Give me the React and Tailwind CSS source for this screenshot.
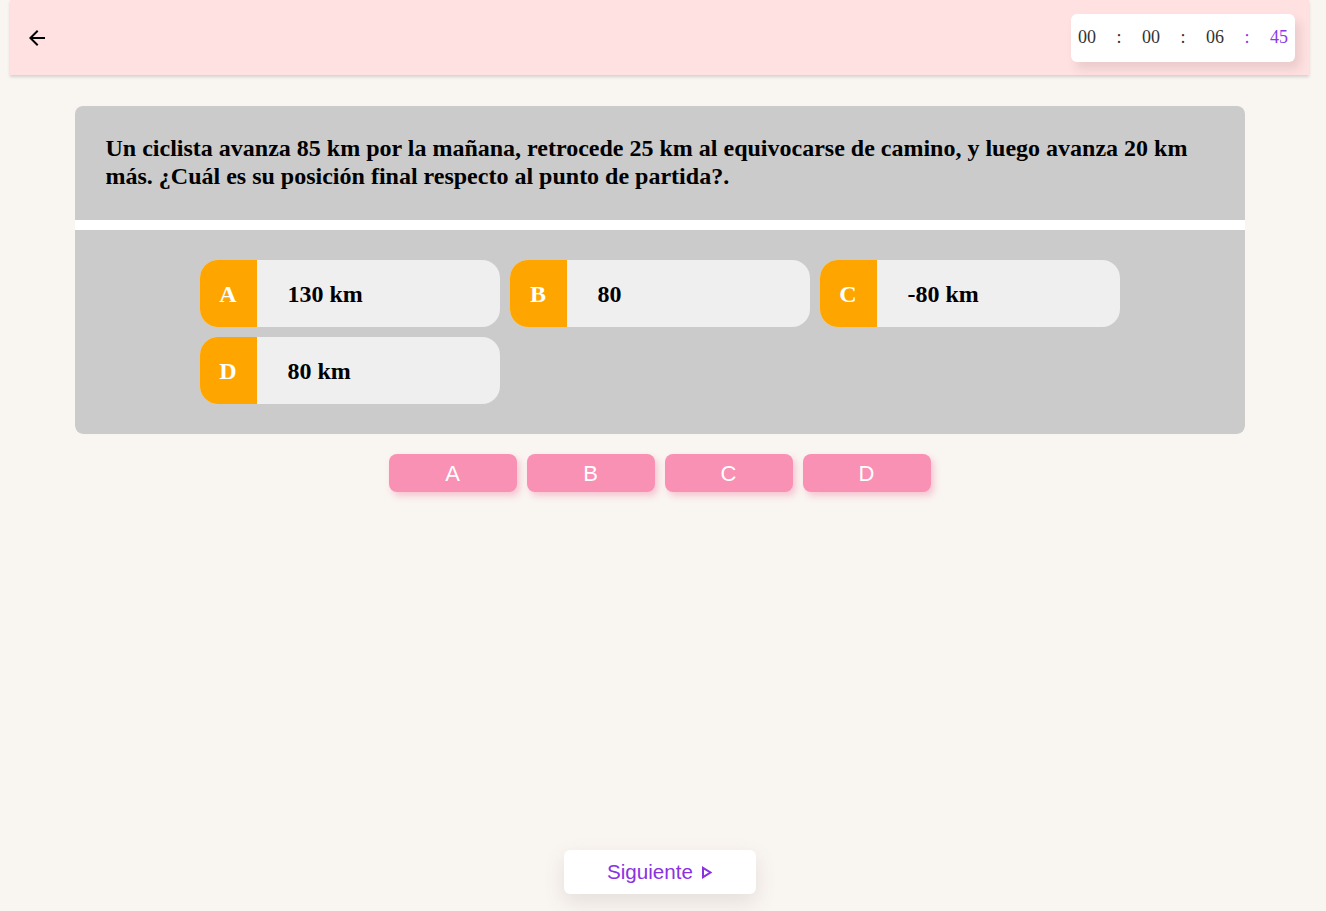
import { MdArrowBack } from "react-icons/md";

const serif = { fontFamily: '"Liberation Serif", "Times New Roman", serif' };
const sans = { fontFamily: '"Liberation Sans", Arial, sans-serif' };

const options = [
  { letter: "A", text: "130 km" },
  { letter: "B", text: "80" },
  { letter: "C", text: "-80 km" },
  { letter: "D", text: "80 km" },
];

const Timer = () => {
  const parts = [
    { v: "00", purple: false },
    { v: "00", purple: false },
    { v: "06", purple: false },
    { v: "45", purple: true },
  ];
  return (
    <div
      className="flex items-center h-[48px] pl-[7px] pr-[7px] bg-white rounded-md shadow-[5px_7px_10px_rgba(120,80,80,0.15)] text-[18px] text-[#333333]"
      style={serif}
    >
      {parts.map((p, idx) => (
        <div key={idx} className="flex items-center">
          {idx > 0 && (
            <span className={`mx-[20.5px] ${p.purple ? "text-[#8a3be6]" : ""}`}>:</span>
          )}
          <span className={p.purple ? "text-[#8a3be6]" : ""}>{p.v}</span>
        </div>
      ))}
    </div>
  );
};

const OptionCard = ({ letter, text }) => (
  <div className="flex w-[300px] h-[67px] rounded-[18px] overflow-hidden bg-[#efefef]">
    <div className="w-[57px] shrink-0 bg-[#ffa500] flex items-center justify-center text-white font-bold text-[24px]">
      {letter}
    </div>
    <div className="flex items-center pl-[31px] text-black font-bold text-[24px]">
      {text}
    </div>
  </div>
);

export default function App() {
  return (
    <div className="min-h-screen bg-[#f9f5f1] flex flex-col">
      <div className="ml-[10px] mr-[17px] flex flex-col flex-1">
        <header className="h-[75px] bg-[#ffe1e2] shadow-[0_2px_3px_rgba(0,0,0,0.15)] flex items-center justify-between pl-[15px] pr-[14px]">
          <button className="text-black">
            <MdArrowBack size={24} />
          </button>
          <Timer />
        </header>

        <main className="flex flex-col items-center flex-1" style={serif}>
          <div className="mt-[31px] w-[1170px] bg-white rounded-lg overflow-hidden flex flex-col gap-[10px]">
            <div className="bg-[#cbcbcb] pl-[31px] pr-[30px] pt-[28px] pb-[30px]">
              <h4 className="text-[24px] leading-[28px] font-bold text-black">
                Un ciclista avanza 85 km por la mañana, retrocede 25 km al equivocarse de camino, y luego avanza 20 km más. ¿Cuál es su posición final respecto al punto de partida?.
              </h4>
            </div>
            <div className="bg-[#cbcbcb] py-[30px] rounded-b-lg flex justify-center">
              <div className="grid grid-cols-3 gap-[10px] w-[920px]">
                {options.map((o) => (
                  <OptionCard key={o.letter} letter={o.letter} text={o.text} />
                ))}
              </div>
            </div>
          </div>

          <div className="mt-[20px] flex gap-[10px]" style={sans}>
            {options.map((o) => (
              <button
                key={o.letter}
                className="w-[128px] h-[38px] rounded-lg bg-[#f991b4] text-white text-[22px] flex items-center justify-center shadow-[3px_4px_6px_rgba(245,140,175,0.45)]"
              >
                {o.letter}
              </button>
            ))}
          </div>

          <div className="mt-auto mb-[17px] pt-[20px]">
            <button
              className="w-[192px] h-[44px] bg-white rounded-md shadow-[0_8px_20px_rgba(120,100,90,0.15)] flex items-center justify-center gap-[8px] text-[#8a32e2] text-[20.6px]"
              style={sans}
            >
              <span>Siguiente</span>
              <svg width="11" height="13" viewBox="0 0 11 13" fill="none">
                <path
                  d="M2 1.8 L9.5 6.5 L2 11.2 Z"
                  stroke="currentColor"
                  strokeWidth="2"
                  strokeLinejoin="miter"
                />
              </svg>
            </button>
          </div>
        </main>
      </div>
    </div>
  );
}
